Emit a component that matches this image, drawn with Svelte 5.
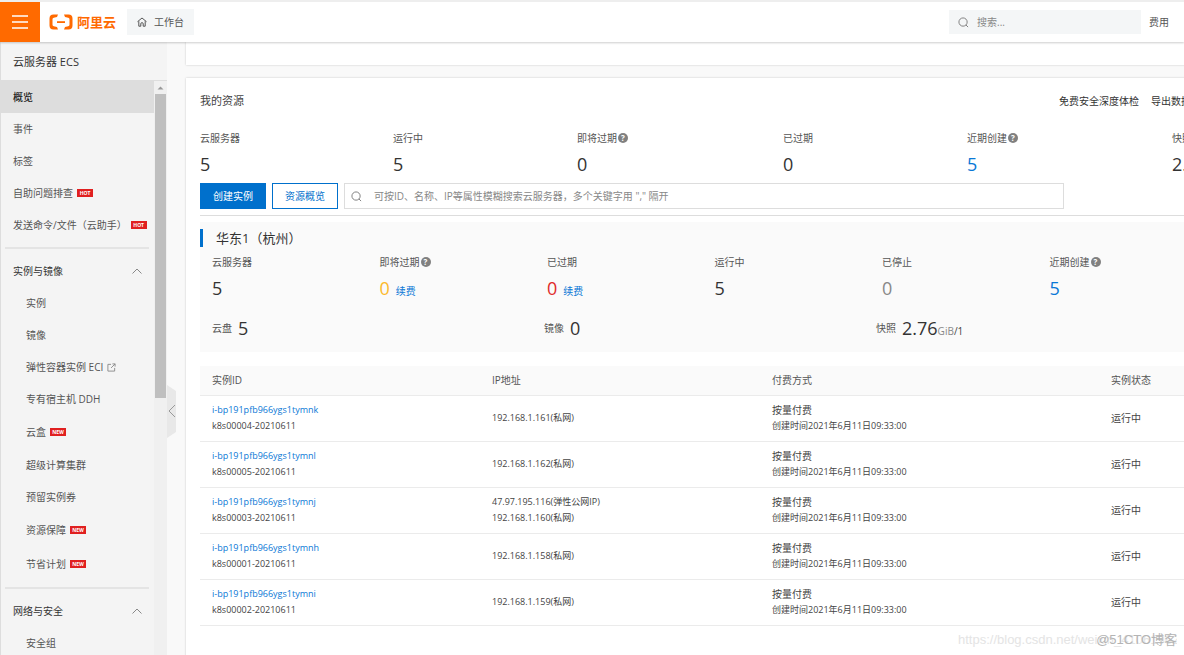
<script lang="ts">
  interface NavItem {
    label: string;
    badge?: string;
    active?: boolean;
    external?: boolean;
  }

  interface Stat {
    label: string;
    value: string;
    help?: boolean;
    tone?: string;
    renew?: boolean;
  }

  const topItems: NavItem[] = [
    { label: '概览', active: true },
    { label: '事件' },
    { label: '标签' },
    { label: '自助问题排查', badge: 'HOT' },
    { label: '发送命令/文件（云助手）', badge: 'HOT' }
  ];

  const groups: { title: string; items: NavItem[] }[] = [
    {
      title: '实例与镜像',
      items: [
        { label: '实例' },
        { label: '镜像' },
        { label: '弹性容器实例 ECI', external: true },
        { label: '专有宿主机 DDH' },
        { label: '云盒', badge: 'NEW' },
        { label: '超级计算集群' },
        { label: '预留实例券' },
        { label: '资源保障', badge: 'NEW' },
        { label: '节省计划', badge: 'NEW' }
      ]
    },
    {
      title: '网络与安全',
      items: [{ label: '安全组' }]
    }
  ];

  const totals: Stat[] = [
    { label: '云服务器', value: '5' },
    { label: '运行中', value: '5' },
    { label: '即将过期', value: '0', help: true },
    { label: '已过期', value: '0' },
    { label: '近期创建', value: '5', help: true, tone: 'blue' },
    { label: '快照', value: '2.76' }
  ];

  const regionStats: Stat[] = [
    { label: '云服务器', value: '5' },
    { label: '即将过期', value: '0', help: true, tone: 'amber', renew: true },
    { label: '已过期', value: '0', tone: 'red', renew: true },
    { label: '运行中', value: '5' },
    { label: '已停止', value: '0', tone: 'gray' },
    { label: '近期创建', value: '5', help: true, tone: 'blue' }
  ];

  const storage = [
    { label: '云盘', value: '5', unit: '', count: '' },
    { label: '镜像', value: '0', unit: '', count: '' },
    { label: '快照', value: '2.76', unit: 'GiB', count: '/1' }
  ];

  const instances = [
    { id: 'i-bp191pfb966ygs1tymnk', name: 'k8s00004-20210611', ips: ['192.168.1.161(私网)'] },
    { id: 'i-bp191pfb966ygs1tymnl', name: 'k8s00005-20210611', ips: ['192.168.1.162(私网)'] },
    { id: 'i-bp191pfb966ygs1tymnj', name: 'k8s00003-20210611', ips: ['47.97.195.116(弹性公网IP)', '192.168.1.160(私网)'] },
    { id: 'i-bp191pfb966ygs1tymnh', name: 'k8s00001-20210611', ips: ['192.168.1.158(私网)'] },
    { id: 'i-bp191pfb966ygs1tymni', name: 'k8s00002-20210611', ips: ['192.168.1.159(私网)'] }
  ];
</script>

{#snippet navLink(item: NavItem)}
  <a href="#nav" class="nav-item" class:active={item.active} class:tall={item.badge === 'NEW'}>
    <span>{item.label}</span>
    {#if item.badge}
      <span class="badge">{item.badge}</span>
    {/if}
    {#if item.external}
      <svg class="external" viewBox="0 0 10 10" aria-hidden="true">
        <path d="M4.5 1.5H1v7.5h7.5V5.5M6 1h3v3M9 1L4.5 5.5" />
      </svg>
    {/if}
  </a>
{/snippet}

{#snippet statCell(stat: Stat)}
  <div class="stat">
    <div class="stat-label">
      {stat.label}{#if stat.help}<span class="help">?</span>{/if}
    </div>
    <div class="stat-value">
      <span class="number {stat.tone ?? ''}">{stat.value}</span>
      {#if stat.renew}
        <a href="#renew">续费</a>
      {/if}
    </div>
  </div>
{/snippet}

<div class="page">
  <header class="topbar">
    <button class="menu-btn" aria-label="菜单">
      <svg viewBox="0 0 16 14"><path d="M0 1h16M0 7h16M0 13h16" /></svg>
    </button>
    <a href="#home" class="logo">
      <svg viewBox="0 0 24 16" aria-hidden="true">
        <path class="bracket" d="M9 .5H4.500Q.5 .5 .5 4.500v7Q.5 15.500 4.500 15.500H9L8 13L4.800 12.300Q3.500 12 3.500 10.800V5.200Q3.500 4 4.800 3.700L8 3ZM15 .5h4.500Q23.500 .5 23.500 4.500v7Q23.500 15.500 19.500 15.500H15L16 13L19.200 12.300Q20.500 12 20.500 10.800V5.200Q20.500 4 19.200 3.700L16 3Z" />
        <path class="bracket" d="M8 7.200h8v1.800H8z" />
      </svg>
      <span>阿里云</span>
    </a>
    <a href="#workbench" class="workbench">
      <svg viewBox="0 0 10 10" aria-hidden="true">
        <path d="M0.500 4.700L5 1l4.500 3.700M1.800 4.200v5h2v-2.500q0-1 1.200-1t1.200 1v2.500h2v-5" />
      </svg>
      <span>工作台</span>
    </a>
    <div class="topbar-right">
      <label class="top-search">
        <svg class="search-icon" viewBox="0 0 12 12" aria-hidden="true">
          <circle cx="5.500" cy="5.500" r="4.500" /><path d="M8.700 8.700L11 11" />
        </svg>
        <input type="text" placeholder="搜索..." aria-label="搜索" />
      </label>
      <a href="#billing">费用</a>
    </div>
  </header>

  <div class="body">
    <aside class="sidebar">
      <h1>云服务器 ECS</h1>
      <div class="sidebar-scroll">
        <nav>
          {#each topItems as item}
            {@render navLink(item)}
          {/each}
          {#each groups as group}
            <hr />
            <button class="group-title">
              <span>{group.title}</span>
              <svg viewBox="0 0 10 6" aria-hidden="true"><path d="M0.500 5.500L5 1l4.500 4.500" /></svg>
            </button>
            <div class="group">
              {#each group.items as item}
                {@render navLink(item)}
              {/each}
            </div>
          {/each}
        </nav>
        <div class="scrollbar">
          <svg viewBox="0 0 13 13" aria-hidden="true"><path d="M3.500 8.500h6l-3-3z" /></svg>
          <div class="thumb"></div>
        </div>
      </div>
      <button class="collapse" aria-label="收起">
        <svg viewBox="0 0 9 53" aria-hidden="true">
          <path class="tab" d="M0 0L9 6v41L0 53z" />
          <path class="arrow" d="M8 20L2 26l6 6" />
        </svg>
      </button>
    </aside>

    <main>
      <section class="card stub"></section>
      <section class="card resources">
        <div class="card-head">
          <h2>我的资源</h2>
          <div class="head-links">
            <a href="#check">免费安全深度体检</a>
            <a href="#export">导出数据</a>
          </div>
        </div>

        <div class="totals">
          {#each totals as stat}
            {@render statCell(stat)}
          {/each}
        </div>

        <div class="toolbar">
          <button class="btn primary">创建实例</button>
          <button class="btn">资源概览</button>
          <label class="filter">
            <svg class="search-icon" viewBox="0 0 12 12" aria-hidden="true">
              <circle cx="5.500" cy="5.500" r="4.500" /><path d="M8.700 8.700L11 11" />
            </svg>
            <input
              type="text"
              aria-label="搜索云服务器"
              placeholder={'可按ID、名称、IP等属性模糊搜索云服务器，多个关键字用 "," 隔开'}
            />
          </label>
        </div>

        <div class="region">
          <h3>华东1（杭州）</h3>
          <div class="region-stats">
            {#each regionStats as stat}
              {@render statCell(stat)}
            {/each}
          </div>
          <div class="storage">
            {#each storage as item}
              <div class="storage-item">
                <span class="stat-label">{item.label}</span>
                <span class="storage-value">
                  <span class="number">{item.value}</span>{#if item.unit}<span class="unit">{item.unit}</span>{item.count}{/if}
                </span>
              </div>
            {/each}
          </div>
        </div>

        <table>
          <thead>
            <tr>
              <th class="col-id">实例ID</th>
              <th class="col-ip">IP地址</th>
              <th class="col-pay">付费方式</th>
              <th>实例状态</th>
            </tr>
          </thead>
          <tbody>
            {#each instances as instance}
              <tr>
                <td class="small">
                  <a href="#instance">{instance.id}</a>
                  <div>{instance.name}</div>
                </td>
                <td class="small">
                  {#each instance.ips as ip}
                    <div>{ip}</div>
                  {/each}
                </td>
                <td>
                  <div>按量付费</div>
                  <div class="small">创建时间2021年6月11日09:33:00</div>
                </td>
                <td>运行中</td>
              </tr>
            {/each}
          </tbody>
        </table>
      </section>
    </main>
  </div>

  <div class="watermark">
    <span class="source">https://blog.csdn.net/weixin_41061962</span>
    <span class="site">@51CTO博客</span>
  </div>
</div>

<style>
  :global(body) {
    margin: 0;
    background: #fff;
  }

  .page {
    position: relative;
    display: flex;
    flex-direction: column;
    height: 100vh;
    overflow: hidden;
    font: 10px/16px 'Open Sans', 'Noto Sans CJK SC', sans-serif;
    color: #444;
  }

  .page *,
  .page {
    box-sizing: border-box;
  }

  a {
    color: #0a78d6;
    text-decoration: none;
  }

  button,
  input {
    margin: 0;
    padding: 0;
    border: 0;
    background: none;
    font: inherit;
    color: inherit;
  }

  h1,
  h2,
  h3 {
    margin: 0;
    font-weight: 400;
  }

  svg {
    display: block;
    fill: none;
    stroke: currentColor;
  }

  /* top bar */
  .topbar {
    position: relative;
    z-index: 2;
    display: flex;
    flex: none;
    align-items: center;
    height: 42px;
    border-top: 2px solid #eee;
    background: #fff;
    box-shadow: 0 1px 2px rgba(0, 0, 0, 0.2);
  }

  .menu-btn {
    display: flex;
    align-items: center;
    justify-content: center;
    width: 40px;
    height: 40px;
    background: #ff6a00;
    color: #fff;
  }

  .menu-btn svg {
    width: 16px;
    stroke-width: 1.4;
  }

  .logo {
    display: flex;
    align-items: center;
    gap: 4px;
    margin: 0 11px 0 9px;
    font-size: 13px;
    font-weight: 700;
    color: #ff6a00;
  }

  .logo svg {
    width: 24px;
  }

  .bracket {
    fill: currentColor;
    stroke: none;
  }

  .workbench {
    display: flex;
    align-items: center;
    gap: 7px;
    height: 26px;
    padding: 0 10px;
    background: #f4f6f7;
    color: #555;
  }

  .workbench svg {
    width: 10px;
  }

  .topbar-right {
    display: flex;
    align-items: center;
    gap: 8px;
    margin-left: auto;
    padding-right: 15px;
  }

  .topbar-right a {
    color: #555;
  }

  .top-search {
    display: flex;
    align-items: center;
    gap: 8px;
    width: 192px;
    height: 24px;
    padding: 0 9px;
    background: #f4f6f7;
  }

  .search-icon {
    flex: none;
    width: 11px;
    color: #777;
  }

  input {
    flex: 1;
    min-width: 0;
    outline: none;
  }

  input::placeholder {
    color: #888;
    opacity: 1;
  }

  /* sidebar */
  .body {
    display: flex;
    flex: 1;
    min-height: 0;
  }

  .sidebar {
    position: relative;
    display: flex;
    flex: none;
    flex-direction: column;
    width: 167px;
    background: #f4f4f4;
    box-shadow: inset 1px 0 #ddd;
  }

  .sidebar h1 {
    flex: none;
    height: 39px;
    padding-left: 13px;
    border-bottom: 1px solid #ddd;
    font-size: 11px;
    line-height: 39px;
    color: #333;
  }

  .sidebar-scroll {
    display: flex;
    flex: 1;
    min-height: 0;
  }

  nav {
    flex: 1;
    overflow: hidden;
  }

  .nav-item {
    display: flex;
    align-items: center;
    gap: 4px;
    height: 32px;
    padding-left: 13px;
    white-space: nowrap;
    color: #555;
  }

  .nav-item.tall {
    height: 34px;
  }

  .nav-item.active {
    background: #ddd;
    font-weight: 500;
    color: #222;
  }

  .group .nav-item {
    padding-left: 26px;
  }

  .badge {
    width: 16px;
    height: 8px;
    background: #e02020;
    font-size: 5px;
    font-weight: 700;
    line-height: 8px;
    text-align: center;
    color: #fff;
  }

  .external {
    width: 9px;
    color: #888;
  }

  hr {
    height: 2px;
    margin: 6px 5px;
    border: 0;
    background: #e4e4e4;
  }

  .group-title {
    display: flex;
    align-items: center;
    justify-content: space-between;
    width: 100%;
    height: 32px;
    padding: 0 12px 0 13px;
    color: #333;
  }

  .group-title svg {
    width: 10px;
    color: #888;
  }

  .scrollbar {
    width: 13px;
    background: #f0f0f0;
  }

  .scrollbar svg {
    fill: #999;
    stroke: none;
  }

  .thumb {
    height: 53%;
    margin: 0 1px;
    background: #bfbfbf;
  }

  .collapse {
    position: absolute;
    top: 343px;
    left: 100%;
    z-index: 1;
    width: 9px;
    height: 53px;
  }

  .tab {
    fill: #e8e8e8;
    stroke: none;
  }

  .arrow {
    stroke: #999;
  }

  /* main */
  main {
    flex: 1;
    min-width: 0;
    padding-left: 19px;
    overflow: hidden;
    background: #f9f9f9;
  }

  .card {
    min-width: 1057px;
    background: #fff;
    box-shadow: 0 0 2px rgba(0, 0, 0, 0.2);
  }

  .stub {
    height: 23px;
    margin-bottom: 13px;
  }

  .resources {
    min-height: 100%;
    padding: 15px 14px;
  }

  .card-head {
    display: flex;
    align-items: center;
    justify-content: space-between;
    margin-bottom: 21px;
    padding-right: 38px;
  }

  h2 {
    font-size: 11px;
  }

  .head-links {
    display: flex;
    gap: 12px;
  }

  .head-links a {
    color: #333;
  }

  .totals {
    display: grid;
    grid-template-columns: 193fr 184fr 206fr 184fr 205fr 57fr;
  }

  .stat-label {
    display: flex;
    align-items: center;
    color: #555;
  }

  .help {
    width: 10px;
    height: 10px;
    margin-left: 1px;
    border-radius: 50%;
    background: #808080;
    font-size: 8px;
    font-weight: 700;
    line-height: 10px;
    text-align: center;
    color: #fff;
  }

  .stat-value {
    display: flex;
    align-items: baseline;
    gap: 6px;
    margin-top: 6px;
    line-height: 24px;
  }

  .number {
    font-size: 18px;
    line-height: 24px;
    color: #333;
  }

  .number.blue {
    color: #0a78d6;
  }

  .number.amber {
    color: #fcb92c;
  }

  .number.red {
    color: #e02b2b;
  }

  .number.gray {
    color: #888;
  }

  .toolbar {
    display: flex;
    gap: 6px;
    margin-top: 7px;
    padding-bottom: 6px;
    border-bottom: 1px solid #ddd;
  }

  .btn {
    width: 66px;
    height: 26px;
    border: 1px solid #0070cc;
    color: #0070cc;
  }

  .btn.primary {
    background: #0070cc;
    color: #fff;
  }

  .filter {
    display: flex;
    align-items: center;
    gap: 12px;
    width: 70%;
    padding: 0 6px;
    border: 1px solid #ddd;
  }

  .region {
    margin-top: 6px;
    padding: 7px 12px 12px;
    background: #fafafa;
  }

  h3 {
    margin: 0 -12px 7px;
    padding-left: 13px;
    border-left: 3px solid #0070cc;
    font-size: 13px;
    line-height: 18px;
    color: #333;
  }

  .region-stats {
    display: grid;
    grid-template-columns: repeat(6, 1fr);
  }

  .storage {
    display: grid;
    grid-template-columns: 332fr 332fr 341fr;
    margin-top: 13px;
  }

  .storage-item {
    display: flex;
    align-items: center;
    gap: 6px;
    height: 24px;
  }

  .unit {
    color: #888;
  }

  table {
    width: 100%;
    margin-top: 14px;
    border-collapse: collapse;
    table-layout: fixed;
  }

  th,
  td {
    padding: 0 12px;
    border-bottom: 1px solid #ebebeb;
    text-align: left;
  }

  th {
    height: 29px;
    background: #fafafa;
    font-weight: 400;
    color: #555;
  }

  td {
    height: 46px;
  }

  .small {
    font-size: 9px;
  }

  .col-id,
  .col-ip {
    width: 280px;
  }

  .col-pay {
    width: 339px;
  }

  /* watermark lies over the page corner */
  .watermark {
    position: absolute;
    right: 7px;
    bottom: 6px;
    z-index: 3;
    display: grid;
    width: 219px;
    font-family: 'Liberation Sans', 'Noto Sans CJK SC', sans-serif;
    font-size: 13px;
    line-height: 18px;
    white-space: nowrap;
    pointer-events: none;
  }

  .watermark span {
    grid-area: 1 / 1;
  }

  .source {
    overflow: hidden;
    color: #e4e4e4;
  }

  .site {
    justify-self: end;
    color: #b4b4b4;
  }
</style>
